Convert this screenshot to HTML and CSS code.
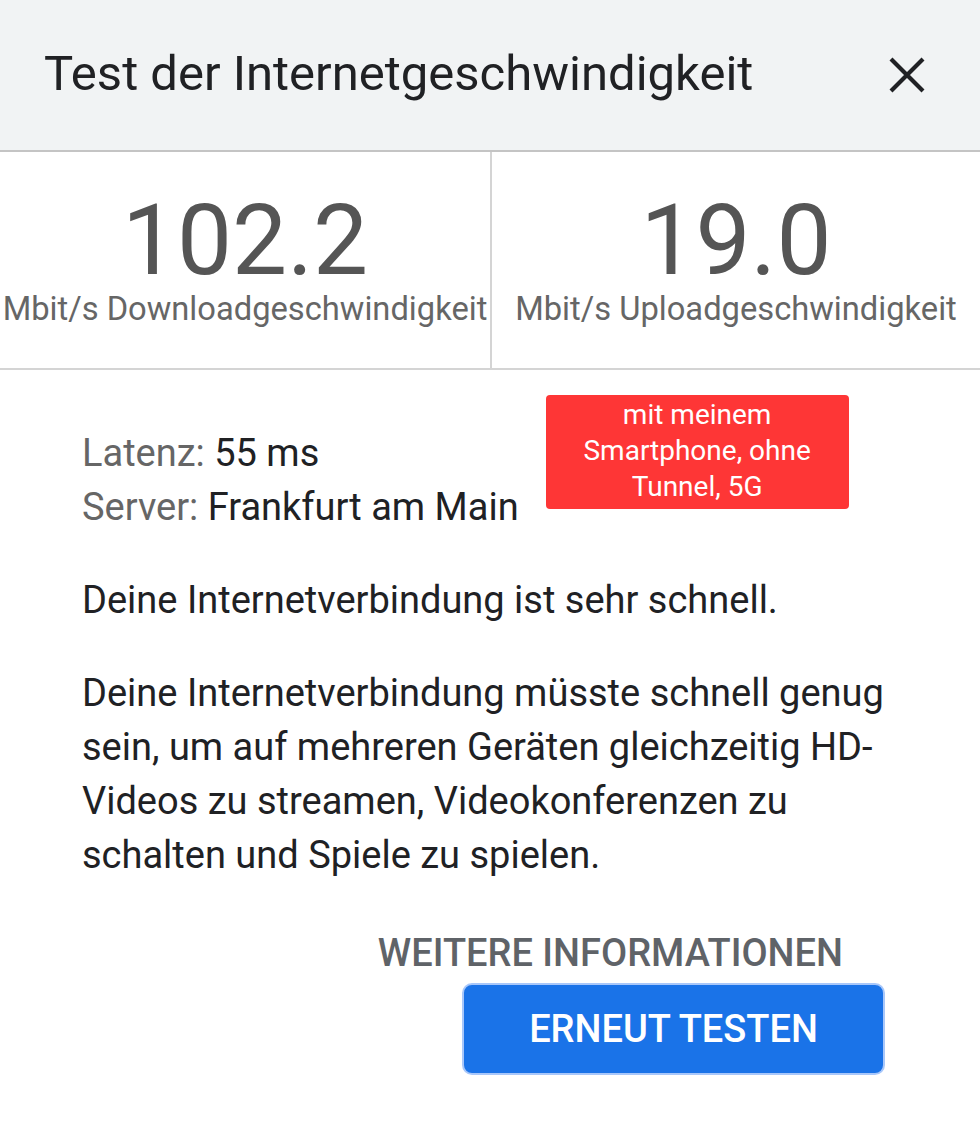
FILE: index.html
```html
<!DOCTYPE html>
<html lang="de">
<head>
    <meta charset="UTF-8">
    <meta name="viewport" content="width=device-width, initial-scale=1.0">
    <title>Test der Internetgeschwindigkeit</title>
    <link rel="stylesheet" href="styles.css">
</head>
<body>
    <header class="kopf">
        <h1>Test der Internetgeschwindigkeit</h1>
        <button class="schliessen" aria-label="Schließen">
            <svg width="38" height="38" viewBox="0 0 38 38">
                <path d="M3 3L35 35M35 3L3 35" stroke="#202124" stroke-width="4.2" fill="none"/>
            </svg>
        </button>
    </header>
    <section class="werte">
        <div class="wert">
            <div class="zahl">102.2</div>
            <div class="einheit">Mbit/s Downloadgeschwindigkeit</div>
        </div>
        <div class="wert">
            <div class="zahl">19.0</div>
            <div class="einheit">Mbit/s Uploadgeschwindigkeit</div>
        </div>
    </section>
    <main class="inhalt">
        <div class="details">
            <div class="zeilen">
                <p><span class="grau">Latenz:</span> 55 ms</p>
                <p><span class="grau">Server:</span> Frankfurt am Main</p>
            </div>
            <div class="notiz">mit meinem<br>Smartphone, ohne<br>Tunnel, 5G</div>
        </div>
        <p class="text">Deine Internetverbindung ist sehr schnell.</p>
        <p class="text">Deine Internetverbindung müsste schnell genug sein, um auf mehreren Geräten gleichzeitig HD-Videos zu streamen, Videokonferenzen zu schalten und Spiele zu spielen.</p>
        <div class="aktionen">
            <a class="mehr" href="#">WEITERE INFORMATIONEN</a>
            <button class="nochmal">ERNEUT TESTEN</button>
        </div>
    </main>
</body>
</html>
```
FILE: styles.css
```css
body {
    font-family: Roboto, "Noto Sans", sans-serif;
    background-color: white;
    color: #202124;
    margin: 0;
    padding: 0;
}
.kopf {
    height: 152px;
    background-color: #f1f3f4;
    border-bottom: 2px solid #c4c4c4;
    display: flex;
    align-items: center;
    justify-content: space-between;
    padding: 0 54px 0 44px;
    box-sizing: border-box;
}
.kopf h1 {
    font-size: 49px;
    font-weight: 400;
    margin: 0;
    padding-bottom: 4px;
}
.schliessen {
    background: none;
    border: none;
    padding: 0;
    display: flex;
}
.werte {
    display: grid;
    grid-template-columns: 490px 1fr;
    border-bottom: 2px solid #d4d4d4;
    height: 216px;
}
.wert {
    text-align: center;
    color: #555555;
    padding-top: 42px;
}
.wert + .wert {
    border-left: 2px solid #d4d4d4;
}
.zahl {
    font-size: 98px;
    line-height: 94px;
}
.einheit {
    font-size: 32.7px;
    line-height: 38px;
    color: #666666;
    margin-top: 2px;
    white-space: nowrap;
}
.inhalt {
    padding: 25px 78px 0 82px;
}
.details {
    display: flex;
    align-items: flex-start;
    gap: 27px;
}
.zeilen {
    padding-top: 31px;
}
.zeilen p {
    font-size: 38px;
    margin: 0;
    line-height: 54px;
    white-space: nowrap;
}
.grau {
    color: #666666;
}
.notiz {
    background-color: #fe3636;
    color: white;
    font-size: 28px;
    line-height: 36px;
    text-align: center;
    width: 303px;
    padding: 2px 0 4px;
    border-radius: 4px;
}
.text {
    font-size: 38px;
    line-height: 54px;
    margin: 39px 0 0;
}
.aktionen {
    display: flex;
    flex-direction: column;
    align-items: flex-end;
    margin-top: 44px;
    padding-right: 17px;
}
.mehr {
    font-size: 38px;
    line-height: 54px;
    font-weight: 500;
    color: #5f6368;
    text-decoration: none;
    margin-right: 42px;
}
.nochmal {
    margin-top: 3px;
    width: 423px;
    height: 92px;
    background-color: #1a73e8;
    color: white;
    border: 2px solid #a8c7fa;
    border-radius: 10px;
    font-family: Roboto, sans-serif;
    font-size: 38px;
    font-weight: 500;
}
```
